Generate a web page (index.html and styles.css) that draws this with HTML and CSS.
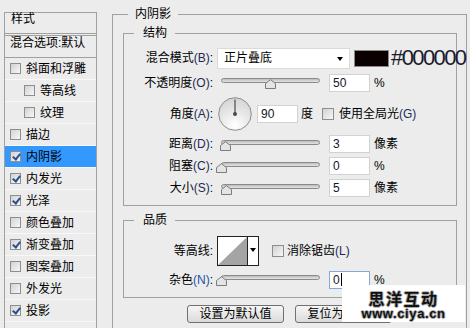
FILE: index.html
```html
<!DOCTYPE html>
<html>

<head>
    <meta charset="UTF-8">
    <title>图层样式</title>
    <link rel="stylesheet" href="styles.css">
</head>

<body>

<div id="dialog">
    <div id="styles">
        <div class="head">样式</div>
        <div class="blend">混合选项:默认</div>
        <ul class="list">
            <li><span class="cb"></span>斜面和浮雕</li>
            <li class="sub"><span class="cb"></span>等高线</li>
            <li class="sub"><span class="cb"></span>纹理</li>
            <li><span class="cb"></span>描边</li>
            <li class="on"><span class="cb checked"></span>内阴影</li>
            <li><span class="cb checked"></span>内发光</li>
            <li><span class="cb checked"></span>光泽</li>
            <li><span class="cb"></span>颜色叠加</li>
            <li><span class="cb checked"></span>渐变叠加</li>
            <li><span class="cb"></span>图案叠加</li>
            <li><span class="cb"></span>外发光</li>
            <li><span class="cb checked"></span>投影</li>
        </ul>
    </div>

    <fieldset id="panel">
        <legend>内阴影</legend>

        <fieldset class="group struct">
            <legend>结构</legend>
            <div class="row r-blend">
                <label>混合模式<em>(B)</em>:</label>
                <div class="select">正片叠底<span class="arrow"></span></div>
                <span class="swatch"></span>
                <span class="hex">#000000</span>
            </div>
            <div class="row r-opacity">
                <label>不透明度<em>(O)</em>:</label>
                <div class="slider">
                    <div class="track"></div>
                    <svg class="thumb" style="left: 49px;" width="11" height="10" viewBox="0 0 11 10"><path d="M0.5 9.5V4.5L5.5 0.7L10.5 4.5V9.5Z" fill="#e4e4e4" stroke="#7c7c7c"/></svg>
                </div>
                <div class="num">50</div>
                <span class="unit">%</span>
            </div>
            <div class="row r-angle">
                <label>角度<em>(A)</em>:</label>
                <svg class="dial" width="34" height="34" viewBox="0 0 34 34">
                    <defs>
                        <radialGradient id="dialfill" cx="50%" cy="85%" r="80%">
                            <stop offset="0" stop-color="#ffffff"/>
                            <stop offset="1" stop-color="#d6d6d6"/>
                        </radialGradient>
                    </defs>
                    <circle cx="17" cy="17" r="16.3" fill="url(#dialfill)" stroke="#8c8c8c"/>
                    <line x1="17" y1="17" x2="17" y2="2.5" stroke="#4a4a4a" stroke-width="1.2"/>
                    <circle cx="17" cy="17" r="2" fill="#4a4a4a"/>
                </svg>
                <div class="num angle">90</div>
                <span class="unit deg">度</span>
                <span class="cb big"></span>
                <span class="cb-text">使用全局光<em>(G)</em></span>
            </div>
            <div class="row r-slide">
                <label>距离<em>(D)</em>:</label>
                <div class="slider">
                    <div class="track"></div>
                    <svg class="thumb" style="left: 4px;" width="11" height="10" viewBox="0 0 11 10"><path d="M0.5 9.5V4.5L5.5 0.7L10.5 4.5V9.5Z" fill="#e4e4e4" stroke="#7c7c7c"/></svg>
                </div>
                <div class="num">3</div>
                <span class="unit">像素</span>
            </div>
            <div class="row r-slide">
                <label>阻塞<em>(C)</em>:</label>
                <div class="slider">
                    <div class="track"></div>
                    <svg class="thumb" style="left: 0px;" width="11" height="10" viewBox="0 0 11 10"><path d="M0.5 9.5V4.5L5.5 0.7L10.5 4.5V9.5Z" fill="#e4e4e4" stroke="#7c7c7c"/></svg>
                </div>
                <div class="num">0</div>
                <span class="unit">%</span>
            </div>
            <div class="row r-slide">
                <label>大小<em>(S)</em>:</label>
                <div class="slider">
                    <div class="track"></div>
                    <svg class="thumb" style="left: 5px;" width="11" height="10" viewBox="0 0 11 10"><path d="M0.5 9.5V4.5L5.5 0.7L10.5 4.5V9.5Z" fill="#e4e4e4" stroke="#7c7c7c"/></svg>
                </div>
                <div class="num">5</div>
                <span class="unit">像素</span>
            </div>
        </fieldset>

        <fieldset class="group quality">
            <legend>品质</legend>
            <div class="row r-contour">
                <label>等高线:</label>
                <div class="contour">
                    <svg width="29" height="28" viewBox="0 0 29 28"><polygon points="0,28 29,0 29,28" fill="#a4a4a4"/></svg>
                    <span class="drop"><span class="arrow"></span></span>
                </div>
                <span class="cb big"></span>
                <span class="cb-text">消除锯齿<em>(L)</em></span>
            </div>
            <div class="row r-noise">
                <label>杂色<em class="blue">(N)</em>:</label>
                <div class="slider">
                    <div class="track"></div>
                    <svg class="thumb" style="left: 0px;" width="11" height="10" viewBox="0 0 11 10"><path d="M0.5 9.5V4.5L5.5 0.7L10.5 4.5V9.5Z" fill="#e4e4e4" stroke="#7c7c7c"/></svg>
                </div>
                <div class="num focus">0<span class="caret"></span></div>
                <span class="unit">%</span>
            </div>
        </fieldset>

        <div class="btns">
            <button>设置为默认值</button>
            <button>复位为默认值</button>
        </div>
    </fieldset>

    <div id="mark">
        <div class="mark-cn">思洋互动</div>
        <div class="mark-url">www.ciya.cn</div>
    </div>
</div>

</body>

</html>
```

FILE: styles.css
```css
* {
    margin: 0;
    padding: 0;
    box-sizing: border-box;
}
body {
    background: #ececec;
    font: 12px/16px "Liberation Sans", "Noto Sans CJK SC", sans-serif;
    color: #000;
}
#dialog {
    position: relative;
    display: flex;
    align-items: flex-start;
    width: 470px;
    height: 328px;
    overflow: hidden;
}

/* 左侧样式列表 */
#styles {
    flex-shrink: 0;
    width: 93px;
    height: 330px;
    margin: 12px 0 0 4px;
    border: 1px solid #a0a0a0;
    border-bottom: 0;
}
#styles .head {
    height: 21px;
    padding-left: 6px;
    line-height: 12px;
    border-bottom: 1px solid #a0a0a0;
    margin-bottom: 1px;
}
#styles .blend {
    height: 23px;
    padding-left: 5px;
    line-height: 14px;
    border-top: 1px solid #a0a0a0;
    border-bottom: 1px solid #a0a0a0;
}
.list {
    list-style: none;
}
.list li {
    display: flex;
    align-items: center;
    height: 22px;
    padding-left: 5px;
    border-bottom: 1px solid #f8f8f8;
}
.list li.sub {
    padding-left: 19px;
}
.list li.on {
    background: #3399ff;
}
.cb {
    position: relative;
    flex-shrink: 0;
    width: 11px;
    height: 11px;
    margin-right: 5px;
    border: 1px solid #8e8e8e;
    background: linear-gradient(135deg, #d2d2d2, #f7f7f7);
}
.cb.big {
    width: 12px;
    height: 12px;
    margin-right: 0;
}
.cb.checked::after {
    content: "";
    position: absolute;
    left: 3px;
    top: 0px;
    width: 3px;
    height: 6px;
    border: solid #2c4f8f;
    border-width: 0 2px 2px 0;
    transform: rotate(38deg);
}

/* 右侧面板 */
#panel {
    flex-shrink: 0;
    width: 355px;
    height: 330px;
    min-width: 0;
    margin: 6px 0 0 15px;
    padding: 0 10px;
    border: 1px solid #a0a0a0;
}
#panel > legend {
    margin-left: 5px;
    padding: 0 7px;
    line-height: 17px;
}
.group {
    width: 334px;
    min-width: 0;
    border: 1px solid #a0a0a0;
}
.group legend {
    margin-left: 10px;
    padding: 0 8px 0 9px;
    line-height: 17px;
}
.struct {
    margin-top: 2px;
    padding: 4px 0 6px;
}
.quality {
    margin-top: 6px;
    padding: 4px 0 7px;
}
.row {
    display: flex;
    align-items: center;
    white-space: nowrap;
}
.row > * {
    flex-shrink: 0;
}
.row label {
    width: 89px;
    text-align: right;
}
em {
    font-style: normal;
    color: #1e2a56;
}
em.blue {
    color: #1f50a8;
}
.r-blend { height: 24px; }
.r-opacity { height: 25px; }
.r-angle { height: 38px; }
.r-slide { height: 22px; }
.r-contour { height: 36px; }
.r-noise { height: 21px; }

.select {
    position: relative;
    width: 133px;
    height: 21px;
    margin-left: 4px;
    padding-left: 6px;
    line-height: 19px;
    background: #fff;
    border: 1px solid #dadada;
}
.arrow {
    position: absolute;
    right: 6px;
    top: 8px;
    border-left: 3px solid transparent;
    border-right: 3px solid transparent;
    border-top: 4px solid #000;
}
.swatch {
    width: 35px;
    height: 17px;
    margin-left: 4px;
    background: #0a0000;
    border: 1px solid #8a8a8a;
}
.hex {
    margin-left: 2px;
    font-size: 22px;
    line-height: 22px;
    letter-spacing: -1.6px;
    color: #1a1a2c;
}

.slider {
    position: relative;
    width: 110px;
    height: 12px;
    margin: 3px 0 0 3px;
}
.track {
    width: 99px;
    height: 5px;
    margin-left: 5px;
    border: 1px solid #8a8a8a;
    border-radius: 3px;
    background: linear-gradient(#bcbcbc, #e4e4e4);
}
.thumb {
    position: absolute;
    top: 1px;
}
.num {
    width: 41px;
    height: 18px;
    margin-left: 3px;
    padding-left: 3px;
    line-height: 16px;
    background: #fff;
    border: 1px solid #d2d2d2;
    color: #15152a;
}
.num.focus {
    border-color: #86a9d4;
}
.caret {
    display: inline-block;
    width: 1px;
    height: 13px;
    margin-left: 1px;
    vertical-align: -2px;
    background: #000;
}
.unit {
    margin-left: 4px;
}
.dial {
    margin-left: 5px;
}
.num.angle {
    margin-left: 5px;
}
.unit.deg {
    margin-left: 3px;
    margin-right: 9px;
}
.cb-text {
    margin-left: 5px;
}
.r-contour .cb {
    margin-left: 13px;
}
.r-contour .cb-text {
    margin-left: 3px;
}
.contour {
    display: flex;
    width: 42px;
    height: 30px;
    margin-left: 4px;
    background: #fff;
    border: 1px solid #222;
}
.contour svg {
    display: block;
}
.contour .drop {
    position: relative;
    width: 11px;
    border-left: 1px solid #222;
}
.contour .arrow {
    right: 2px;
    top: 11px;
}

.btns {
    display: flex;
    justify-content: center;
    gap: 11px;
    margin-top: 7px;
}
.btns button {
    width: 97px;
    height: 18px;
    font: 12px/14px "Liberation Sans", "Noto Sans CJK SC", sans-serif;
    color: #000;
    border: 1px solid #707070;
    border-radius: 3px;
    background: linear-gradient(#f6f6f6, #dadada);
}

/* 水印 */
#mark {
    position: absolute;
    left: 342px;
    top: 285px;
    width: 123px;
    height: 37px;
    background: #fff;
    text-align: center;
    color: #111;
}
.mark-cn {
    margin-top: 5px;
    font: bold 16px/17px "Noto Sans CJK SC", sans-serif;
    letter-spacing: 1.5px;
    text-shadow: 1px 0 #aaa, -1px 0 #aaa, 0 1px #aaa, 0 -1px #aaa;
}
.mark-url {
    font: bold 13px/13px "Liberation Sans", sans-serif;
    letter-spacing: 0.6px;
    text-shadow: 1px 0 #aaa, -1px 0 #aaa, 0 1px #aaa, 0 -1px #aaa;
}
```
